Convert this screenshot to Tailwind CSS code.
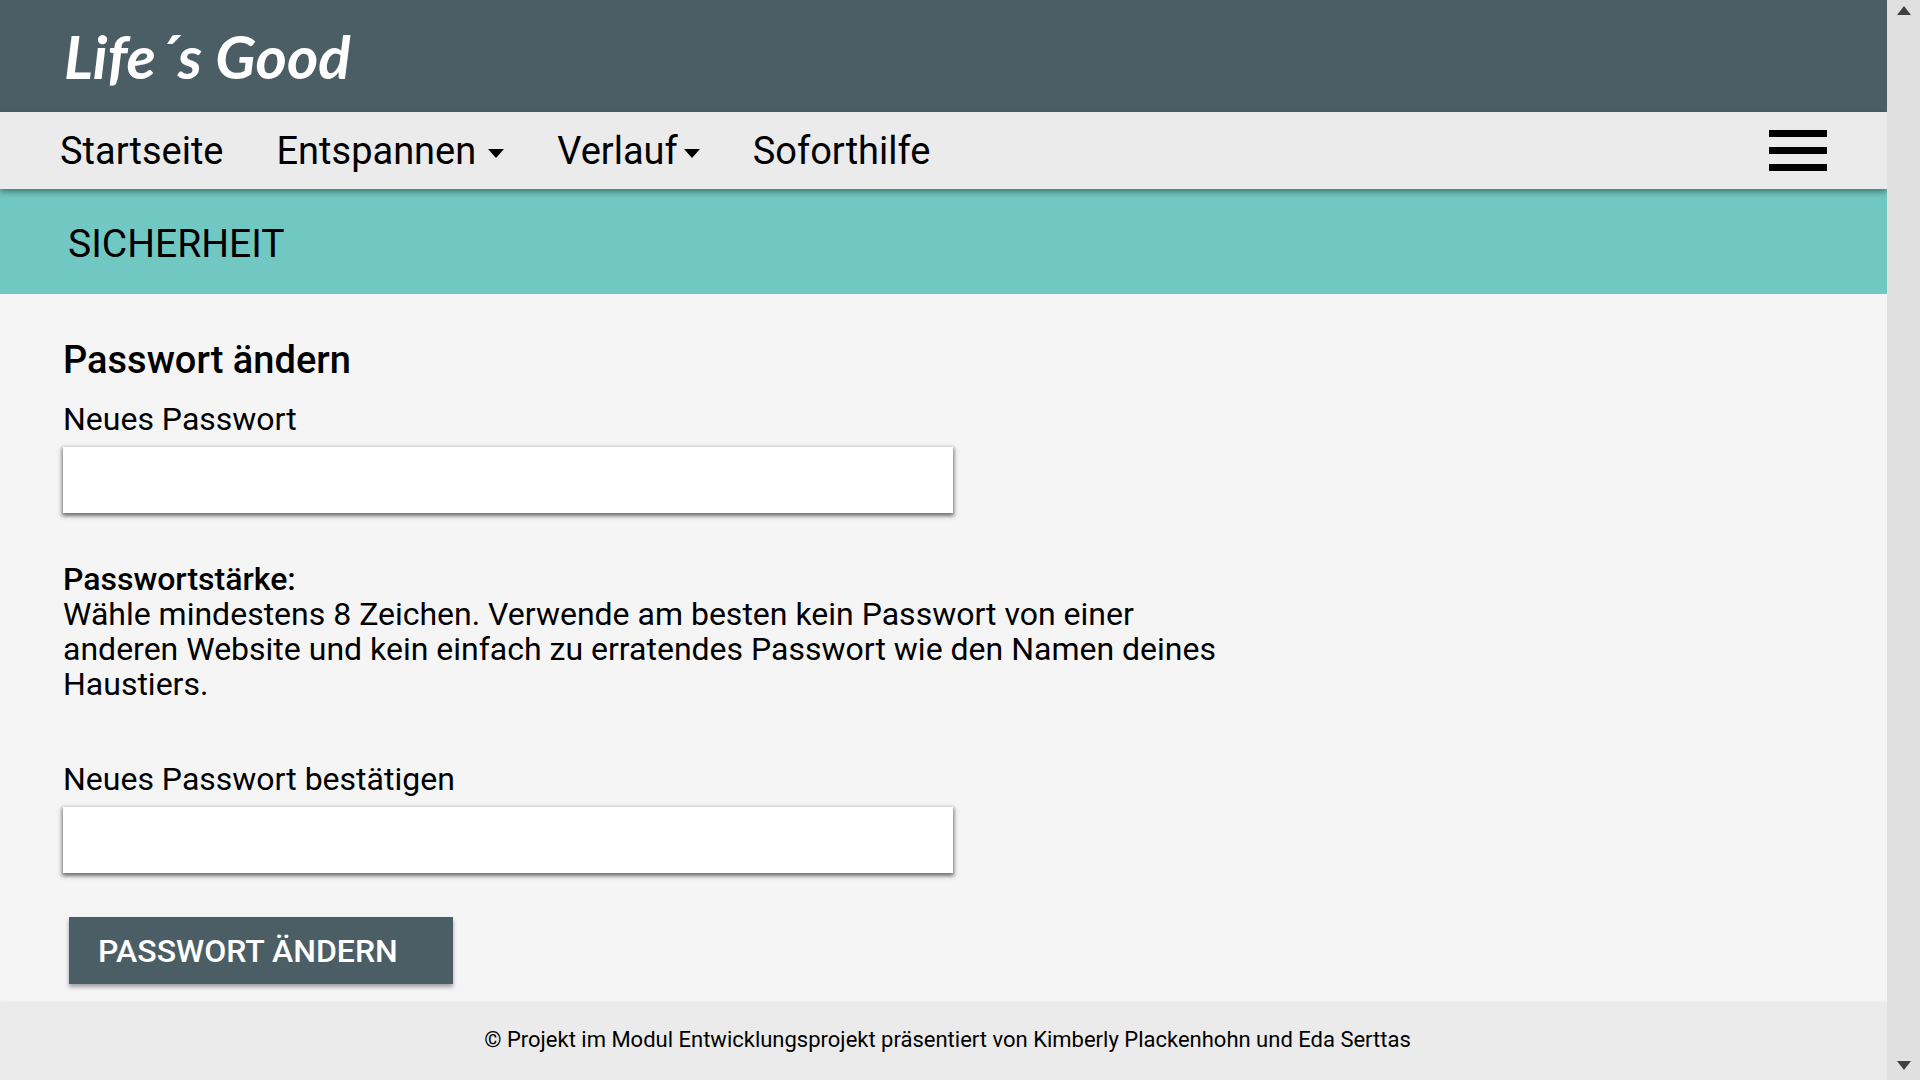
<!DOCTYPE html>
<html lang="de">
<head>
<meta charset="utf-8">
<meta name="viewport" content="width=device-width, initial-scale=1">
<title>Life´s Good – Sicherheit</title>
<script src="https://cdn.jsdelivr.net/npm/@tailwindcss/browser@4"></script>
</head>
<body class="flex min-h-screen bg-[#f5f5f5] font-['Roboto',sans-serif] text-black">

  <div class="flex min-w-0 flex-1 flex-col">
    <header class="flex h-28 items-center bg-[#4c5e65] px-16">
      <a href="#" class="font-['Lato',sans-serif] text-[60px] leading-none font-bold text-white italic">Life´s Good</a>
    </header>

    <nav class="relative flex h-[77px] items-center justify-between bg-[#ebebeb] px-[60px] shadow-[0_3px_6px_rgba(0,0,0,0.4)]">
      <ul class="flex items-center gap-[53px] text-[38px] leading-none">
        <li><a href="#">Startseite</a></li>
        <li>
          <button type="button" class="flex items-center gap-3">Entspannen
            <svg class="mt-1.5 h-[9px] w-4" viewBox="0 0 16 9" aria-hidden="true"><path d="M0 0h16L8 9z"/></svg>
          </button>
        </li>
        <li>
          <button type="button" class="flex items-center gap-1.5">Verlauf
            <svg class="mt-1.5 h-[9px] w-4" viewBox="0 0 16 9" aria-hidden="true"><path d="M0 0h16L8 9z"/></svg>
          </button>
        </li>
        <li><a href="#">Soforthilfe</a></li>
      </ul>
      <button type="button" aria-label="Menü">
        <svg class="h-[41px] w-[58px]" viewBox="0 0 58 41" aria-hidden="true"><path d="M0 0h58v7H0zM0 17h58v7H0zM0 34h58v7H0z"/></svg>
      </button>
    </nav>

    <div class="flex h-[105px] items-center bg-[#71c8c2] px-[68px] pt-1.5">
      <h1 class="text-[39px] leading-none">SICHERHEIT</h1>
    </div>

    <main class="flex-1 px-[63px] pt-[42px] pb-[19px]">
      <form>
        <h2 class="text-[38px] leading-[48px] font-medium">Passwort ändern</h2>
        <label for="new" class="mt-[17px] block text-[32px] leading-9">Neues Passwort</label>
        <input id="new" type="password" class="mt-2.5 block h-[66px] w-full max-w-[890px] bg-white px-4 text-[32px] shadow-[0_2px_4px_1px_rgba(0,0,0,0.55)] outline-none">

        <div class="mt-[49px] max-w-[1180px] text-[32px] leading-[35px]">
          <h3 class="font-medium">Passwortstärke:</h3>
          <p>Wähle mindestens 8 Zeichen. Verwende am besten kein Passwort von einer anderen Website und kein einfach zu erratendes Passwort wie den Namen deines Haustiers.</p>
        </div>

        <label for="confirm" class="mt-[59px] block text-[32px] leading-9">Neues Passwort bestätigen</label>
        <input id="confirm" type="password" class="mt-2.5 block h-[66px] w-full max-w-[890px] bg-white px-4 text-[32px] shadow-[0_2px_4px_1px_rgba(0,0,0,0.55)] outline-none">

        <button type="submit" class="mt-11 ml-1.5 block h-[67px] w-96 bg-[#4c5e65] pl-[29px] text-left text-[32px] font-medium text-white shadow-[0_3px_4px_rgba(0,0,0,0.35)]">PASSWORT ÄNDERN</button>
      </form>
    </main>

    <footer class="flex h-[77px] items-center justify-center bg-[#ebebeb] pb-1 pl-2 shadow-[0_0_3px_rgba(0,0,0,0.12)]">
      <p class="text-[22px] leading-none">© Projekt im Modul Entwicklungsprojekt präsentiert von Kimberly Plackenhohn und Eda Serttas</p>
    </footer>
  </div>

  <!-- Scroll track with its two arrow buttons; stays above the nav's shadow -->
  <aside class="relative flex w-[33px] shrink-0 flex-col items-center justify-between bg-[#e0e0e0] pt-1.5 pb-2.5">
    <button type="button" aria-label="Nach oben">
      <svg class="block h-[9px] w-3.5" viewBox="0 0 14 9" aria-hidden="true"><path fill="#404040" d="M7 0l7 9H0z"/></svg>
    </button>
    <button type="button" aria-label="Nach unten">
      <svg class="block h-[9px] w-3.5" viewBox="0 0 14 9" aria-hidden="true"><path fill="#404040" d="M0 0h14L7 9z"/></svg>
    </button>
  </aside>

</body>
</html>
